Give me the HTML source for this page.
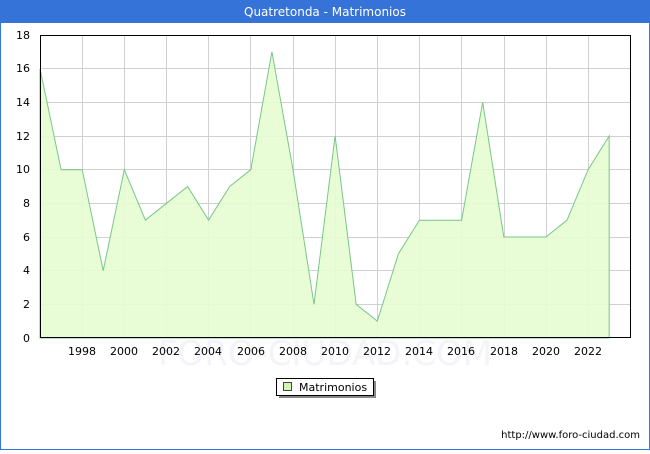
<!DOCTYPE html>
<html><head><style>
body{margin:0;width:650px;height:450px;overflow:hidden;font-family:"DejaVu Sans","Liberation Sans",sans-serif;}
</style></head><body>
<svg width="650" height="450" xmlns="http://www.w3.org/2000/svg" font-family="DejaVu Sans, Liberation Sans, sans-serif">
<rect x="0" y="0" width="650" height="450" fill="#fff"/>
<rect x="0.5" y="0.5" width="649" height="449" fill="none" stroke="#3573d8"/>
<rect x="0" y="0" width="650" height="23" fill="#3573d8"/>
<text x="325" y="16" fill="#fff" font-size="12" text-anchor="middle">Quatretonda - Matrimonios</text>
<text x="325" y="365" fill="#f3f3f9" font-size="34" text-anchor="middle">FORO-CIUDAD.COM</text>
<g stroke="#d0d0d0" stroke-width="1">
<line x1="40" y1="304.5" x2="630" y2="304.5"/><line x1="40" y1="270.5" x2="630" y2="270.5"/>
<line x1="40" y1="237.5" x2="630" y2="237.5"/><line x1="40" y1="203.5" x2="630" y2="203.5"/>
<line x1="40" y1="169.5" x2="630" y2="169.5"/><line x1="40" y1="136.5" x2="630" y2="136.5"/>
<line x1="40" y1="102.5" x2="630" y2="102.5"/><line x1="40" y1="68.5" x2="630" y2="68.5"/>
<line x1="82.5" y1="35" x2="82.5" y2="338"/><line x1="124.5" y1="35" x2="124.5" y2="338"/>
<line x1="166.5" y1="35" x2="166.5" y2="338"/><line x1="208.5" y1="35" x2="208.5" y2="338"/>
<line x1="250.5" y1="35" x2="250.5" y2="338"/><line x1="293.5" y1="35" x2="293.5" y2="338"/>
<line x1="335.5" y1="35" x2="335.5" y2="338"/><line x1="377.5" y1="35" x2="377.5" y2="338"/>
<line x1="419.5" y1="35" x2="419.5" y2="338"/><line x1="461.5" y1="35" x2="461.5" y2="338"/>
<line x1="504.5" y1="35" x2="504.5" y2="338"/><line x1="546.5" y1="35" x2="546.5" y2="338"/>
<line x1="588.5" y1="35" x2="588.5" y2="338"/>
</g>
<polygon fill="#e5fdd0" fill-opacity="0.9" stroke="#78c68a" stroke-width="1" points="40,338 40,68.7 61.1,169.7 82.2,169.7 103.2,270.7 124.3,169.7 145.4,220.2 166.5,203.3 187.6,186.5 208.6,220.2 229.7,186.5 250.8,169.7 271.9,51.8 293,169.7 314,304.3 335.1,136 356.2,304.3 377.3,321.2 398.4,253.8 419.4,220.2 440.5,220.2 461.6,220.2 482.7,102.3 503.8,237 524.8,237 545.9,237 567,220.2 588.1,169.7 609.2,136 609.2,338"/>
<rect x="40.5" y="35.5" width="590" height="302" fill="none" stroke="#000"/>
<g font-size="11" fill="#000" text-anchor="end">
<text x="30" y="342">0</text><text x="30" y="308">2</text><text x="30" y="274">4</text>
<text x="30" y="241">6</text><text x="30" y="207">8</text><text x="30" y="173">10</text>
<text x="30" y="140">12</text><text x="30" y="106">14</text><text x="30" y="72">16</text>
<text x="30" y="39">18</text>
</g>
<g font-size="11" fill="#000" text-anchor="middle">
<text x="82" y="355">1998</text><text x="124" y="355">2000</text><text x="166" y="355">2002</text>
<text x="208" y="355">2004</text><text x="251" y="355">2006</text><text x="293" y="355">2008</text>
<text x="335" y="355">2010</text><text x="377" y="355">2012</text><text x="419" y="355">2014</text>
<text x="461" y="355">2016</text><text x="504" y="355">2018</text><text x="546" y="355">2020</text>
<text x="588" y="355">2022</text>
</g>
<rect x="279" y="381" width="97" height="17" fill="#888"/>
<rect x="276.5" y="378.5" width="97" height="17" fill="#fff" stroke="#000"/>
<rect x="283.5" y="382.5" width="8" height="8" fill="#d2f7b0" stroke="#444"/>
<text x="299" y="391" font-size="11">Matrimonios</text>
<text x="640" y="438" font-size="10" text-anchor="end">http://www.foro-ciudad.com</text>
</svg>
</body></html>
